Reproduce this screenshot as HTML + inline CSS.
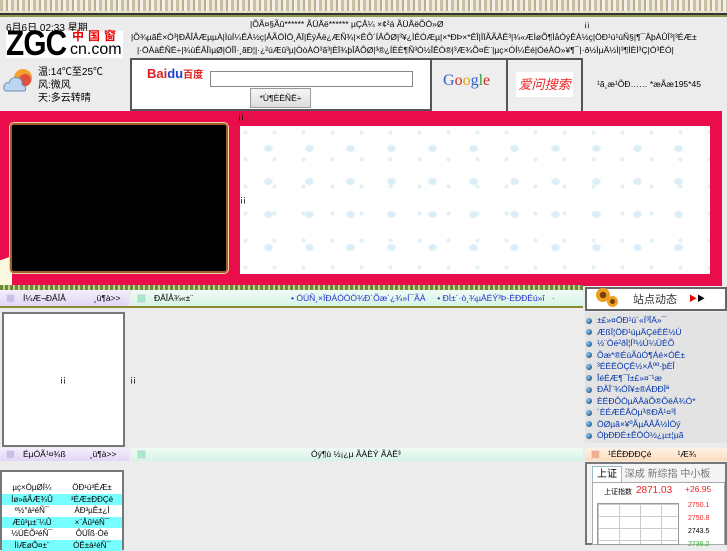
<!DOCTYPE html>
<html><head><meta charset="utf-8"><style>
*{margin:0;padding:0;box-sizing:border-box}
body{width:727px;height:545px;overflow:hidden;background:#ececec;font-family:"Liberation Sans","Noto Sans CJK SC",sans-serif;font-size:9px;color:#000;position:relative}
.a{position:absolute;white-space:nowrap}
.tab1{background:linear-gradient(#f4eefc,#e2d6f6);}
.tab2{background:linear-gradient(#f0fbf6,#d6f3e6);}
.tab3{background:linear-gradient(#fff3e6,#fcdcbc);}
.ic{display:inline-block;width:9px;height:9px;background:#c8c0ea;border:1px solid #e0dcf4;vertical-align:middle;margin-right:8px}
.dot{display:inline-block;width:6px;height:6px;border-radius:50%;background:radial-gradient(circle at 35% 35%,#8cf,#135);margin-right:5px;vertical-align:middle}
.li{color:#0033aa;font-size:8.5px;height:11.5px;line-height:11.5px}
.row{height:11.5px;line-height:11.5px;font-size:8px;display:flex}
.row span{flex:1;text-align:center}
.cy{background:#7ff;}
</style></head><body>
<div class="a" style="left:0;top:0;width:727px;height:12px;background:repeating-linear-gradient(90deg,#c9c0a8 0 3px,#efe9d8 3px 6px,#b8ae98 6px 8px,#f6f1e4 8px 11px)"></div>
<div class="a" style="left:0;top:11px;width:727px;height:2px;background:#e6e0c8"></div>
<div class="a" style="left:0;top:13px;width:727px;height:2px;background:#333"></div>
<div class="a" style="left:0;top:15px;width:727px;height:2px;background:#8a9a4a"></div>

<div class="a" style="left:6px;top:19px;font-size:10px">6月6日 02:33 星期</div>
<div class="a" style="left:6px;top:31px;width:117px;height:27px;background:#fff"></div>
<div class="a" style="left:6px;top:24px;font-size:35px;font-weight:bold;letter-spacing:-1px;font-family:'Liberation Sans',sans-serif;line-height:40px;transform:scaleX(0.85);transform-origin:left">ZGC</div>
<div class="a" style="left:72px;top:30px;font-size:12px;line-height:13px;color:#e00;font-weight:bold;letter-spacing:4px">中国窗</div>
<div class="a" style="left:70px;top:41px;font-size:16px;line-height:17px">cn.com</div>

<svg class="a" style="left:3px;top:66px" width="30" height="28"><circle cx="20" cy="12" r="9" fill="#f3a030"/><circle cx="22" cy="14" r="6" fill="#e05040"/><path d="M4 25 Q0 25 1 20 Q2 16 6 17 Q8 10 15 12 Q20 13 19 19 Q24 20 22 25 Z" fill="#bcd6f0" stroke="#6f90b8"/></svg>
<div class="a" style="left:38px;top:66px;font-size:10px;line-height:13px">温:14℃至25℃<br>风:微风<br>天:多云转晴</div>

<div class="a" style="left:250px;top:19px;font-size:8.5px">|ÕÃ¤§Ãû****** ÃÜÂë****** µÇÂ¼ ×¢²á ÃÜÂëÕÒ»Ø</div>
<div class="a" style="left:584px;top:19px;font-size:8.5px">¡¡</div>
<div class="a" style="left:131px;top:32px;font-size:8.5px">|Õ¾µãÊ×Ò³|ÐÂÎÅÆµµÀ|ÌùÍ¼ÊÀ½ç|ÅÃÖÌÖ¸ÄÏ|ÊýÂë¿ÆÑ¾|×ÊÔ´ÍÂÔØ|³¥¿ÌÊÓÆµ|×*ÐÞ×*ÊÎ|ÌÏÃÃÂÊ³|¾«ÆÌøÕ¶ÌåÓýÊÀ½ç|ÖÐ¹ú¹úÑ§|¶¯ÂþÀÛÎ³|³ÉÆ±</div>
<div class="a" style="left:137px;top:45px;font-size:8.5px">|·ÖÀàÊÑË÷|¾ùÊÂÎìµØ|ÓÎÏ·¸ãÐ¦|·¿²úÆû³µ|ÒòÀÖ³ã³|ÈÏ¾þÎÂÔØ|³®¿ÍÈÈ¶Ñ³Ò½ÎÊÒ®|³Æ¾Õ¤È¨|µç×ÓÍ¼Êé|ÓéÀÖ»¥¶¯|·ð½ÌµÄ½Ì|³¶ÍÈÌ³Ç|Ó³ÊÓ|</div>

<div class="a" style="left:130px;top:58px;width:453px;height:53px;border:2px solid #555;border-right:none;background:#fff"></div>
<div class="a" style="left:430px;top:58px;width:2px;height:53px;background:#555"></div>
<div class="a" style="left:506px;top:58px;width:2px;height:53px;background:#555"></div>
<div class="a" style="left:581px;top:58px;width:2px;height:53px;background:#555"></div>
<div class="a" style="left:432px;top:60px;width:74px;height:51px;background:#eee"></div>
<div class="a" style="left:508px;top:60px;width:73px;height:51px;background:#eee"></div>
<div class="a" style="left:147px;top:66px;font-size:13px;font-weight:bold;color:#e02020">Bai<span style="color:#2040d0">du</span><span style="font-size:10px">百度</span></div>
<div class="a" style="left:210px;top:71px;width:203px;height:16px;border:1px solid #888;background:#fff"></div>
<div class="a" style="left:250px;top:88px;width:61px;height:20px;border:1px solid #999;background:linear-gradient(#f6f6f6,#ddd);font-size:8.5px;text-align:center;line-height:18px">*Ù¶ÈËÑË÷</div>
<div class="a" style="left:443px;top:72px;font-size:16px;font-family:'Liberation Serif',serif"><span style="color:#3060d0">G</span><span style="color:#d03020">o</span><span style="color:#e0a020">o</span><span style="color:#3060d0">g</span><span style="color:#30a040">l</span><span style="color:#d03020">e</span></div>
<div class="a" style="left:516px;top:72px;width:57px;height:25px;background:#fff;color:#e22;font-size:13px;font-style:italic;line-height:25px;text-align:center">爱问搜索</div>
<div class="a" style="left:597px;top:79px;font-size:8.5px">¹ã¸æ¹ÕÐ…… *æÃæ195*45</div>

<div class="a" style="left:0;top:111px;width:722px;height:175px;background:#ea0d4c"></div>
<div class="a" style="left:0;top:240px;width:12px;height:46px;background:linear-gradient(160deg,#ea0d4c 40%,#fdf8e0 41%)"></div>
<div class="a" style="left:10px;top:123px;width:218px;height:150px;background:#000;border:2px solid #a0602a;border-radius:4px;box-shadow:0 0 0 1px #f0d0b0"></div>
<div class="a" style="left:240px;top:126px;width:470px;height:148px;background:#fff;background-image:radial-gradient(ellipse 5px 4px,#dbeef7 70%,transparent 100%),radial-gradient(circle 2.5px,#e2f1f8 70%,transparent 100%);background-size:41px 33px,29px 27px;background-position:8px 6px,20px 20px"></div>
<div class="a" style="left:238px;top:111px;font-size:9px">¡¡</div>
<div class="a" style="left:240px;top:194px;font-size:9px">¡¡</div>

<div class="a" style="left:0;top:285px;width:583px;height:5px;background:repeating-linear-gradient(90deg,#6a8a3a 0 3px,#c0d090 3px 5px)"></div>
<div class="a tab1" style="left:0;top:290px;width:129px;height:16px;font-size:8.5px;line-height:16px;padding-left:6px"><span class="ic"></span>Í¼Æ¬ÐÂÎÅ<span style="margin-left:28px">¸ü¶à&gt;&gt;</span></div>
<div class="a tab2" style="left:131px;top:290px;width:452px;height:16px;font-size:8.5px;line-height:16px;padding-left:6px"><span class="ic" style="background:#a8e8c8"></span>ÐÂÎÅ¾«±¨<span style="position:absolute;left:160px;color:#2030d0">• ÓÚÑ¸×ÏÐÁÓÒÒ¾Ð´Õæ´¿¾»Í¯ÃÀ&nbsp;&nbsp;&nbsp;&nbsp; • ÐÌ±´·ò¸¾µÄÉÝ³Þ·ÈÐÐÉú»î&nbsp;&nbsp;&nbsp;·</span></div>
<div class="a" style="left:0;top:306px;width:583px;height:2px;background:#8a8a30"></div>

<div class="a" style="left:585px;top:287px;width:142px;height:24px;border:2px solid #666;background:#fff"></div>
<div class="a" style="left:596px;top:288px;width:14px;height:14px;border-radius:50%;background:radial-gradient(#7a4010 30%,#f0a020 35%)"></div>
<div class="a" style="left:607px;top:296px;width:11px;height:11px;border-radius:50%;background:radial-gradient(#7a4010 30%,#f0a020 35%)"></div>
<div class="a" style="left:633px;top:291px;font-size:11px;color:#333">站点动态</div>
<div class="a" style="left:689px;top:293px;font-size:8px"><span style="color:#e00">▶</span>▶</div>

<div class="a" style="left:2px;top:312px;width:123px;height:135px;border:2px solid #777;background:#fff"></div>
<div class="a" style="left:60px;top:374px">¡¡</div>
<div class="a" style="left:130px;top:374px">¡¡</div>
<div class="a" style="left:585px;top:312px;width:142px;height:131px;background:#e3e3e3;padding:3px 0 0 1px">
<div class="li"><span class="dot"></span>±£»¤ÖÐ¹ú´«Í³ÎÄ»¯</div>
<div class="li"><span class="dot"></span>ÆßÏ¦ÖÐ¹úµÄÇéÈË½Ú</div>
<div class="li"><span class="dot"></span>½¨Òé²ðÏ¦Í³½Ú¼ÙÈÕ</div>
<div class="li"><span class="dot"></span>Õæ*®ÉúÃûÓ¶Áé×ÓÊ±</div>
<div class="li"><span class="dot"></span>³ÉÈËÒÇÊ½×Åºº·þÈÎ</div>
<div class="li"><span class="dot"></span>ÎéÉÆ¶¯Ï±£»¤¨¹æ</div>
<div class="li"><span class="dot"></span>ÐÂÎ¨¾ÓÏ¥±®ÁÐÐÎª</div>
<div class="li"><span class="dot"></span>ÈËÐÔÒµÄÂäÕ®ÕëÁ¾Ó*</div>
<div class="li"><span class="dot"></span>´ÈÉÆÊÂÒµ³®ÐÂ¹¤³Ì</div>
<div class="li"><span class="dot"></span>ÖØµã×¥ºÃµÄÂÃ½ÌÓý</div>
<div class="li"><span class="dot"></span>ÒþÐÐÉ±ÊÖÒ½¿µ±¦µã</div>
</div>

<div class="a tab1" style="left:0;top:448px;width:129px;height:13px;font-size:8.5px;line-height:13px;padding-left:6px"><span class="ic"></span>ÉµÓÃ¹¤¾ß<span style="margin-left:24px">¸ü¶à&gt;&gt;</span></div>
<div class="a tab2" style="left:131px;top:448px;width:452px;height:13px;font-size:8.5px;line-height:13px;padding-left:6px"><span class="ic" style="background:#a8e8c8"></span><span style="position:absolute;left:180px">Óý¶ù ½¡¿µ ÃÀÈÝ ÃÀÊ³</span></div>
<div class="a tab3" style="left:585px;top:448px;width:142px;height:13px;font-size:8.5px;line-height:13px;padding-left:6px"><span class="ic" style="background:#f0b090"></span>¹ÉÊÐÐÐÇé<span style="margin-left:26px">¹Æ¾</span></div>

<div class="a" style="left:0;top:470px;width:124px;height:80px;border:2px solid #777;background:#fff;padding-top:10px">
<div class="row"><span>µç×ÓµØÍ¼</span><span>ÖÐ¹ú³ÉÆ±</span></div>
<div class="row cy"><span>Íø»ãÃÆ¾Û</span><span>³ÉÆ±ÐÐÇé</span></div>
<div class="row"><span>º½°à²éÑ¯</span><span>ÁÐ³µÊ±¿Ì</span></div>
<div class="row cy"><span>Æû³µ±¨¼Û</span><span>×¨Åû³éÑ¯</span></div>
<div class="row"><span>½ÚÈÕ²éÑ¯</span><span>ÔÚÏß·Òë</span></div>
<div class="row cy"><span>ÌìÆøÔ¤±¨</span><span>ÓÊ±à²éÑ¯</span></div>
</div>

<div class="a" style="left:585px;top:462px;width:142px;height:83px;border:2px solid #777;background:#f4f4f4"></div>
<div class="a" style="left:592px;top:466px;width:30px;height:17px;border:1px solid #9bc;background:#fff;font-size:10px;text-align:center;line-height:16px">上证</div>
<div class="a" style="left:622px;top:467px;font-size:10px;color:#777;line-height:16px">&nbsp;深成 新综指 中小板</div>
<div class="a" style="left:592px;top:482px;width:133px;height:63px;border:1px solid #aaa;background:#fff"></div>
<div class="a" style="left:604px;top:487px;font-size:7px">上证指数</div>
<div class="a" style="left:636px;top:485px;font-size:10px;color:#e22">2871.03</div>
<div class="a" style="left:685px;top:484px;font-size:8.5px;color:#e22">+26.95</div>
<div class="a" style="left:597px;top:503px;width:82px;height:42px;border:1px solid #999;background-image:linear-gradient(90deg,#ccc 1px,transparent 1px),linear-gradient(#ccc 1px,transparent 1px);background-size:21px 12px"></div>
<div class="a" style="left:688px;top:499px;font-size:7px;line-height:13px"><span style="color:#e22">2750.1</span><br><span style="color:#e22">2750.8</span><br>2743.5<br><span style="color:#3a3">2736.2</span></div>
</body></html>
